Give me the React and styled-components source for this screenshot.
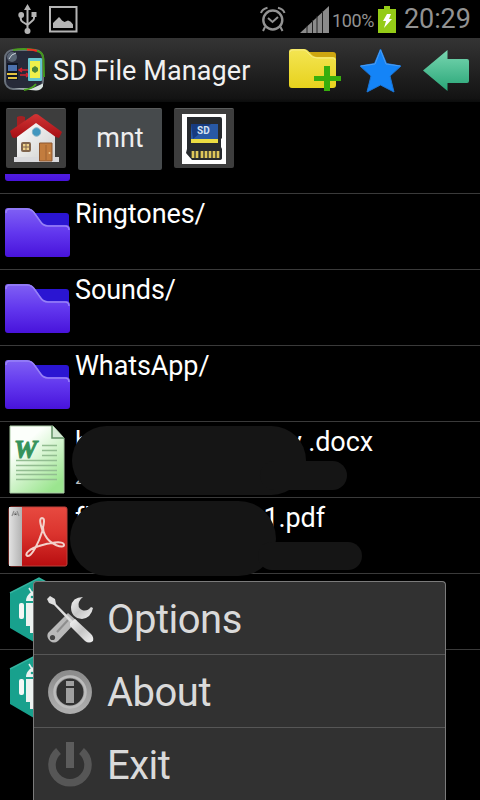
import React from 'react'
import styled, { createGlobalStyle } from 'styled-components'

const GlobalStyle = createGlobalStyle`
    body {
        margin: 0;
        background-color: #000;
        font-family: Roboto, 'Liberation Sans', sans-serif;
    }
`
const Screen = styled.div`
    position: relative;
    display: flex;
    flex-direction: column;
    width: 480px;
    height: 800px;
    overflow: hidden;
    background-color: #000;
    color: #fff;
    svg {
        display: block;
        flex: none;
    }
`
const StatusBar = styled.div`
    display: flex;
    align-items: center;
    box-sizing: border-box;
    height: 38px;
    padding: 0 10px 0 18px;
    color: #929292;
`
const StatusGroup = styled.div`
    display: flex;
    align-items: center;
    gap: ${props => props.$gap}px;
    margin-left: ${props => props.$push ? 'auto' : 0};
`
const Battery = styled.div`
    width: 42px;
    font-size: 18px;
    line-height: 38px;
    margin: 3px 4px 0 3px;
    white-space: nowrap;
    letter-spacing: -0.35px;
`
const Clock = styled.div`
    width: 66px;
    margin-left: 8px;
    font-size: 27px;
    line-height: 38px;
    white-space: nowrap;
    letter-spacing: -0.1px;
`
const ActionBar = styled.div`
    display: flex;
    align-items: center;
    box-sizing: border-box;
    height: 64px;
    padding: 0 11px 0 3px;
    background: linear-gradient(#343434, #131313 94%, #0b0c0c);
`
const Title = styled.div`
    flex: 1;
    margin: 1px 0 0 6px;
    font-size: 27px;
    line-height: 32px;
    letter-spacing: 0.1px;
    white-space: nowrap;
    color: #f1f1f1;
`
const Actions = styled.div`
    display: flex;
    align-items: center;
    gap: 18px;
`
const Path = styled.div`
    display: flex;
    align-items: flex-start;
    gap: 12px;
    box-sizing: border-box;
    height: 72px;
    padding: 6px 6px 0;
`
const PathButton = styled.div`
    display: flex;
    align-items: center;
    justify-content: center;
    box-sizing: border-box;
    width: ${props => props.$wide ? 84 : 60}px;
    height: ${props => props.$wide ? 62 : 60}px;
    padding-bottom: ${props => props.$wide ? 3 : 0}px;
    border-top: 1px solid #5a5c5c;
    border-radius: 2px;
    background-color: ${props => props.$wide ? '#464a4c' : '#3d3d3d'};
    color: #eee;
    font-size: 27px;
`
const List = styled.div`
    display: flex;
    flex: 1;
    flex-direction: column;
    justify-content: flex-start;
    overflow: hidden;
`
const Row = styled.div`
    position: relative;
    display: flex;
    flex: none;
    box-sizing: border-box;
    height: 76px;
    margin-top: ${props => props.$scrolled ? -56 : 0}px;
    border-bottom: ${props => props.$last ? 0 : 1}px solid #3a3a3a;
`
const RowIcon = styled.div`
    width: 75px;
    height: 75px;
`
const RowText = styled.div`
    display: flex;
    flex-direction: column;
`
const Name = styled.div`
    display: flex;
    justify-content: space-between;
    width: ${props => props.$width ? props.$width + 'px' : 'auto'};
    height: 41px;
    padding-top: 4px;
    font-size: 27px;
    line-height: 32px;
    letter-spacing: -0.1px;
    white-space: nowrap;
`
const Detail = styled.div`
    font-size: 18px;
    line-height: 22px;
    color: #bbb;
`
const Cover = styled.div`
    position: absolute;
    z-index: 1;
    left: ${props => props.$x}px;
    top: ${props => props.$y}px;
    width: ${props => props.$w}px;
    height: ${props => props.$h}px;
    border-radius: ${props => props.$r}px;
    background-color: #151515;
`
const Menu = styled.div`
    position: absolute;
    z-index: 2;
    left: 33px;
    top: 581px;
    box-sizing: border-box;
    width: 413px;
    height: 220px;
    border: 1px solid #7b7b7b;
    border-bottom: 0;
    border-radius: 4px 4px 0 0;
    background-color: #313131;
`
const MenuItem = styled.div`
    display: flex;
    align-items: center;
    gap: 12px;
    box-sizing: border-box;
    height: 73px;
    padding: 3px 0 0 11px;
    border-bottom: 1px solid #565656;
    font-size: 40px;
    line-height: 46px;
    letter-spacing: -0.5px;
    color: #dadada;
    &:last-child {
        border-bottom: 0;
    }
`

const UsbIcon = () => (
    <svg width="19" height="30" viewBox="0 0 19 30" fill="none" stroke="#b4b4b4" strokeWidth="2">
        <path d="M9.500 4v22M2.800 11v4q0 2 2 3l4.700 3M16 9v5q0 2-2 3l-4.500 4" />
        <path d="M9.500 0l3.500 6h-7zM13.500 8h5v5h-5z" fill="#b4b4b4" stroke="none" />
        <circle cx="3.200" cy="11" r="2.900" fill="#b4b4b4" stroke="none" />
        <circle cx="9.500" cy="27" r="3" fill="#b4b4b4" stroke="none" />
    </svg>
)

const PictureIcon = () => (
    <svg width="29" height="27" viewBox="0 0 29 27">
        <path d="M1 1h26.500v24.500H1z" fill="none" stroke="#b4b4b4" strokeWidth="2" />
        <path d="M4 22v-5l6-6q1.500 1 3 3.500l2.500 1.500 3.500-1.500q3 .5 5 4V22z" fill="#b4b4b4" />
    </svg>
)

const AlarmIcon = () => (
    <svg width="26" height="26" viewBox="0 0 26 26" fill="none" stroke="#929292" strokeWidth="2">
        <circle cx="12.800" cy="14" r="9.500" strokeWidth="2.400" />
        <path d="M8 12l4.500 4 5.500-5M1 7q1-4 6.500-5.300M24.500 7q-1-4-6.500-5.300M5 21l-2 4M20.500 21l2 4" />
    </svg>
)

const SignalIcon = () => (
    <svg width="29" height="27" viewBox="0 0 29 27">
        <path d="M0 27L29 0v27z" fill="#8b8b8b" />
        <path d="M7 20v7M12.500 14v13M17 10v17M22.500 5v22" stroke="#222" strokeWidth="1" />
    </svg>
)

const BatteryIcon = () => (
    <svg width="18" height="27" viewBox="0 0 18 27">
        <path d="M6 0h6v3h6v24H0V3h6z" fill="#94cb17" />
        <path d="M9 8h4l-2 5h3L6 22l2-7H5z" fill="#fff" />
    </svg>
)

const AppLogo = () => (
    <svg width="44" height="44" viewBox="0 0 44 44">
        <rect x="2" y="2" width="38" height="39" rx="8" fill="#272a39" stroke="#69717b" strokeWidth="2" />
        <path d="M10 2Q20 0 32 2" stroke="#4b9b21" strokeWidth="2" fill="none" />
        <path d="M24 1.500q6 0 10 1.500" stroke="#ee2c21" strokeWidth="2" fill="none" />
        <path d="M34 3q6 1 6.500 8l.5 18" stroke="#43991c" strokeWidth="2" fill="none" />
        <path d="M11 40.500h18l11-5v3q-2 4-7 4z" fill="#d8e3df" />
        <path d="M21 42q8-1 12-6" stroke="#49a31f" strokeWidth="2" fill="none" />
        <circle cx="9" cy="9" r="5" fill="#596574" />
        <path d="M6 11q2-5 7-6" stroke="#cbd2da" fill="none" />
        <path d="M4 15h11v17H4z" fill="#111725" />
        <path d="M5 17h9v6H5z" fill="#4c71ae" />
        <path d="M4 25h10v2H4zM5 29h9v2H5z" fill="#e3c340" />
        <path d="M16 22h10M17 27h9M19 20l-3 2 3 2M23 25l3 2-3 2" stroke="#d6222f" strokeWidth="1.500" fill="none" />
        <rect x="25" y="10" width="14" height="23" rx="1" fill="#65c6ce" />
        <path d="M27 13h10v17H27z" fill="#eff04b" />
        <path d="M29 20l3-2 3 2v3l-3 2-3-2z" fill="#4d863a" />
    </svg>
)

const NewFolderIcon = () => (
    <svg width="53" height="43" viewBox="0 0 53 43">
        <defs>
            <linearGradient id="yellow" x2="0" y2="1">
                <stop stopColor="#f4e553" />
                <stop offset="1" stopColor="#e7d21d" />
            </linearGradient>
        </defs>
        <path d="M16 3h28q3 0 3 3v13H16z" fill="#cda610" />
        <path d="M3 0h12q3 0 6 4 3 4 7 4h16q3 0 3 3v25q0 3-3 3H3q-3 0-3-3V3q0-3 3-3z" fill="url(#yellow)" />
        <path d="M1 3q0-2 3-2h11q2 0 5 4t8 4h16q2 0 2 2" stroke="#f7ec84" fill="none" />
        <path d="M35 17h6v10h11v5H41v10h-6V32H25v-5h10z" fill="#37ae0d" />
    </svg>
)

const StarIcon = () => (
    <svg width="45" height="45" viewBox="0 0 45 45">
        <path d="M20.500 1l6 14.500L41 18 30 28l4 16-13.500-7L7 44l4-16L0 18l14.500-2.500z" fill="#1484f7" stroke="#1b75d6" />
        <path d="M1 18l14-2L20.500 2 26 16l14 2" fill="none" stroke="#4d9df2" />
    </svg>
)

const BackIcon = () => (
    <svg width="46" height="41" viewBox="0 0 46 41">
        <defs>
            <linearGradient id="mint" x2="0" y2="1">
                <stop stopColor="#79d7b1" />
                <stop offset="1" stopColor="#28a577" />
            </linearGradient>
        </defs>
        <path d="M0 20.500L24.500 0v9H44q2 0 2 2v20q0 2-2 2H24.500v8z" fill="url(#mint)" />
    </svg>
)

const HomeIcon = () => (
    <svg width="54" height="51" viewBox="0 0 54 51">
        <defs>
            <linearGradient id="wall" x2="1" y2="1">
                <stop stopColor="#fff" />
                <stop offset="1" stopColor="#cfcfcf" />
            </linearGradient>
            <linearGradient id="roof" x2="0" y2="1">
                <stop stopColor="#d13434" />
                <stop offset="1" stopColor="#a60e14" />
            </linearGradient>
        </defs>
        <path d="M8 4q4-2 8 0v11H8z" fill="#a52022" />
        <path d="M8 22L27 7l19 15v24H8z" fill="url(#wall)" />
        <path d="M27 1q2 0 4 2l22 16-3 6q-3 0-6-3L27 10 8 24q-3 2-5 0l-2-6L23 3q2-2 4-2z" fill="url(#roof)" />
        <path d="M5 44h45v5H5z" fill="#d9d9dd" />
        <circle cx="27.500" cy="19" r="4.200" fill="#4196bf" stroke="#83b1c4" />
        <rect x="12" y="29" width="10" height="10" rx="2" fill="#81654e" />
        <path d="M14 31h6v6h-6z" fill="#f0d38b" />
        <path d="M17 31v6M14 34h6" stroke="#81654e" />
        <path d="M30.500 30h12.500v18H30.500z" fill="#c27c3e" stroke="#8b5631" />
        <path d="M37 32v15" stroke="#9e6333" />
        <circle cx="40.500" cy="40" r="1" fill="#f1c88b" />
    </svg>
)

const SdText = styled.text`
    font: bold 10px Roboto, sans-serif;
    fill: #d6e2f2;
`
const SdIcon = () => (
    <svg width="44" height="50" viewBox="0 0 44 50">
        <path d="M0 0h44v50H0z" fill="#fff" />
        <path d="M5 3h33q2 0 2 2v19l-1 1v8l1 2v9q0 2-3 2H10l-6-7 1-4z" fill="#272a2e" />
        <path d="M9 10h27v17H9z" fill="#2859a6" />
        <path d="M9 10l20 0-18 15z" fill="#173b80" />
        <SdText x="15" y="20">SD</SdText>
        <path d="M9 25h27v4H9z" fill="#ebdc42" />
        <path d="M11 37v7M15 37v7M20 37v7M24 37v7M28 37v7M32 37v7M36 37v7" stroke="#dec65a" strokeWidth="2.700" />
    </svg>
)

const FolderIcon = () => (
    <svg width="75" height="75" viewBox="0 0 75 75">
        <defs>
            <linearGradient id="purple" x2="0" y2="1">
                <stop stopColor="#8061f4" />
                <stop offset=".5" stopColor="#6237ee" />
                <stop offset="1" stopColor="#4813db" />
            </linearGradient>
        </defs>
        <path d="M30 19h36q3 0 3 3v15H30z" fill="#2a15d2" />
        <path d="M8 14h19q5 0 9 6l4 6q3 5 8 5h18q4 0 4 4v25q0 3-3 3H8q-3 0-3-3V17q0-3 3-3z" fill="url(#purple)" />
        <path d="M6 19q0-4 4-4h17q5 0 8 5l5 7q3 5 8 5h17q4 0 4 4" fill="none" stroke="#9681f7" strokeWidth="1.500" />
    </svg>
)

const WordText = styled.text`
    font: italic bold 25px 'Liberation Serif', serif;
    fill: #36935b;
    stroke: #36935b;
    stroke-width: 1px;
`
const DocIcon = () => (
    <svg width="75" height="75" viewBox="0 0 75 75">
        <defs>
            <linearGradient id="paper" x2=".7" y2="1">
                <stop offset=".3" stopColor="#fcfffb" />
                <stop offset="1" stopColor="#9be58f" />
            </linearGradient>
        </defs>
        <path d="M10 4h43l11 12v55H10z" fill="url(#paper)" stroke="#a9c9a5" />
        <path d="M52 4v12h12" fill="#d6e9d5" stroke="#619165" strokeWidth="1.500" />
        <WordText x="14" y="36" textLength="23" lengthAdjust="spacingAndGlyphs">W</WordText>
        <path d="M42 23.500h15M42 28.500h15M42 33.500h15M16 38.500h41M16 43.500h41M16 48.500h41M16 52.500h41M16 57.500h41" stroke="#92bd91" strokeWidth="1.300" />
    </svg>
)

const PdfIcon = () => (
    <svg width="75" height="75" viewBox="0 0 75 75">
        <defs>
            <linearGradient id="red" x2="0" y2="1">
                <stop stopColor="#e74a40" />
                <stop offset=".45" stopColor="#db342e" />
                <stop offset="1" stopColor="#b80e10" />
            </linearGradient>
            <linearGradient id="silver" x2="1" y2="0">
                <stop stopColor="#e2e2e2" />
                <stop offset="1" stopColor="#b2b2b2" />
            </linearGradient>
        </defs>
        <rect x="9" y="9" width="58" height="59" rx="2" fill="url(#red)" stroke="#bc403b" />
        <path d="M9 9h13v59H9z" fill="url(#silver)" />
        <path d="M12 18l2-5M19 18l-2-5M14 17l1.500-2 1.500 2" stroke="#909090" strokeWidth="1.300" />
        <path d="M43 34c-3-8-4-14-1-14 4 0 1 9 0 14-3 10-10 24-14 24-5-1 2-8 11-10 9-3 25-6 25-1 0 4-14 0-19-10-2-3-2-5-2-8" fill="none" stroke="#f3d1ca" strokeWidth="2" />
    </svg>
)

const ApkIcon = () => (
    <svg width="75" height="75" viewBox="0 0 75 75">
        <path d="M39 4l29 16v36L39 71 10 54V19z" fill="#18a18d" />
        <path d="M10 19L39 4l29 16" fill="none" stroke="#33b39f" strokeWidth="1.500" />
        <path d="M26 27a13 11 0 0 1 26 0z" fill="#eaf3f1" />
        <rect x="19" y="29" width="5" height="16" rx="2" fill="#f4f7f5" />
        <path d="M26 29h26v23H26zM30 52h6v7h-6z" fill="#edf2f0" />
        <path d="M29 14l3 5" stroke="#eaf3f1" strokeWidth="1.500" />
        <circle cx="32" cy="23" r="1.300" fill="#18a18d" />
    </svg>
)

const ToolsIcon = () => (
    <svg width="50" height="50" viewBox="0 0 50 50">
        <defs>
            <linearGradient id="steel" x2="1" y2="1">
                <stop stopColor="#f4f4f4" />
                <stop offset=".5" stopColor="#c6c6c6" />
                <stop offset="1" stopColor="#f2f2f2" />
            </linearGradient>
        </defs>
        <path d="M3 38L23 18l9 8L13 46q-4 3-8 0-4-4-2-8z" fill="#b9b9b9" />
        <path d="M38 2q-11 0-12 10 0 11 11 12 9-1 11-11l-2-1q-4 5-9 3-5-3-3-8 1-3 4-5z" fill="url(#steel)" />
        <circle cx="7.500" cy="42.500" r="2.600" fill="#444" />
        <path d="M12 37l11-12" stroke="#8e8e8e" strokeWidth="2" />
        <path d="M2 4l3-3 5 3 1 5 17 17-2 2L9 10 4 8z" fill="#dedede" />
        <path d="M25 28l5-4 16 15q3 3 2 7-4 3-8 0L25 31z" fill="url(#steel)" />
    </svg>
)

const InfoIcon = () => (
    <svg width="50" height="50" viewBox="0 0 50 50">
        <defs>
            <linearGradient id="ring" x2="0" y2="1">
                <stop stopColor="#8d8d8d" />
                <stop offset="1" stopColor="#adadad" />
            </linearGradient>
        </defs>
        <circle cx="25" cy="24" r="17.700" fill="none" stroke="url(#ring)" strokeWidth="8.500" />
        <circle cx="25" cy="24" r="15.500" fill="none" stroke="#bcbcbc" strokeWidth="2.500" />
        <path d="M21 13h8v5h-8zM21 20h8v15h-8z" fill="#a0a0a0" />
    </svg>
)

const PowerIcon = () => (
    <svg width="50" height="50" viewBox="0 0 50 50">
        <path d="M13.500 10a18 18 0 1 0 23 0" fill="none" stroke="#565656" strokeWidth="7.500" />
        <path d="M21 1h8v26h-8z" fill="#5c5c5c" />
    </svg>
)

const App = () => {
    return (
        <Screen>
            <GlobalStyle />
            <StatusBar>
                <StatusGroup $gap={12}>
                    <UsbIcon />
                    <PictureIcon />
                </StatusGroup>
                <StatusGroup $gap={0} $push>
                    <StatusGroup $gap={14}>
                        <AlarmIcon />
                        <SignalIcon />
                    </StatusGroup>
                    <Battery>100%</Battery>
                    <BatteryIcon />
                    <Clock>20:29</Clock>
                </StatusGroup>
            </StatusBar>
            <ActionBar>
                <AppLogo />
                <Title>SD File Manager</Title>
                <Actions>
                    <NewFolderIcon />
                    <StarIcon />
                    <BackIcon />
                </Actions>
            </ActionBar>
            <Path>
                <PathButton><HomeIcon /></PathButton>
                <PathButton $wide>mnt</PathButton>
                <PathButton><SdIcon /></PathButton>
            </Path>
            <List>
                <Row $scrolled>
                    <RowIcon><FolderIcon /></RowIcon>
                </Row>
                {['Ringtones/', 'Sounds/', 'WhatsApp/'].map(name => (
                    <Row key={name}>
                        <RowIcon><FolderIcon /></RowIcon>
                        <Name>{name}</Name>
                    </Row>
                ))}
                <Row>
                    <RowIcon><DocIcon /></RowIcon>
                    <RowText>
                        <Name $width={298}><span>h</span><span>y .docx</span></Name>
                        <Detail>2</Detail>
                    </RowText>
                    <Cover $x={72} $y={4} $w={234} $h={69} $r={35} />
                    <Cover $x={260} $y={39} $w={87} $h={29} $r={15} />
                </Row>
                <Row>
                    <RowIcon><PdfIcon /></RowIcon>
                    <RowText>
                        <Name $width={250}><span>fl</span><span>1.pdf</span></Name>
                    </RowText>
                    <Cover $x={70} $y={3} $w={206} $h={75} $r={38} />
                    <Cover $x={258} $y={44} $w={104} $h={28} $r={14} />
                </Row>
                <Row>
                    <RowIcon><ApkIcon /></RowIcon>
                </Row>
                <Row $last>
                    <RowIcon><ApkIcon /></RowIcon>
                </Row>
            </List>
            <Menu>
                <MenuItem><ToolsIcon />Options</MenuItem>
                <MenuItem><InfoIcon />About</MenuItem>
                <MenuItem><PowerIcon />Exit</MenuItem>
            </Menu>
        </Screen>
    )
}

export default App
